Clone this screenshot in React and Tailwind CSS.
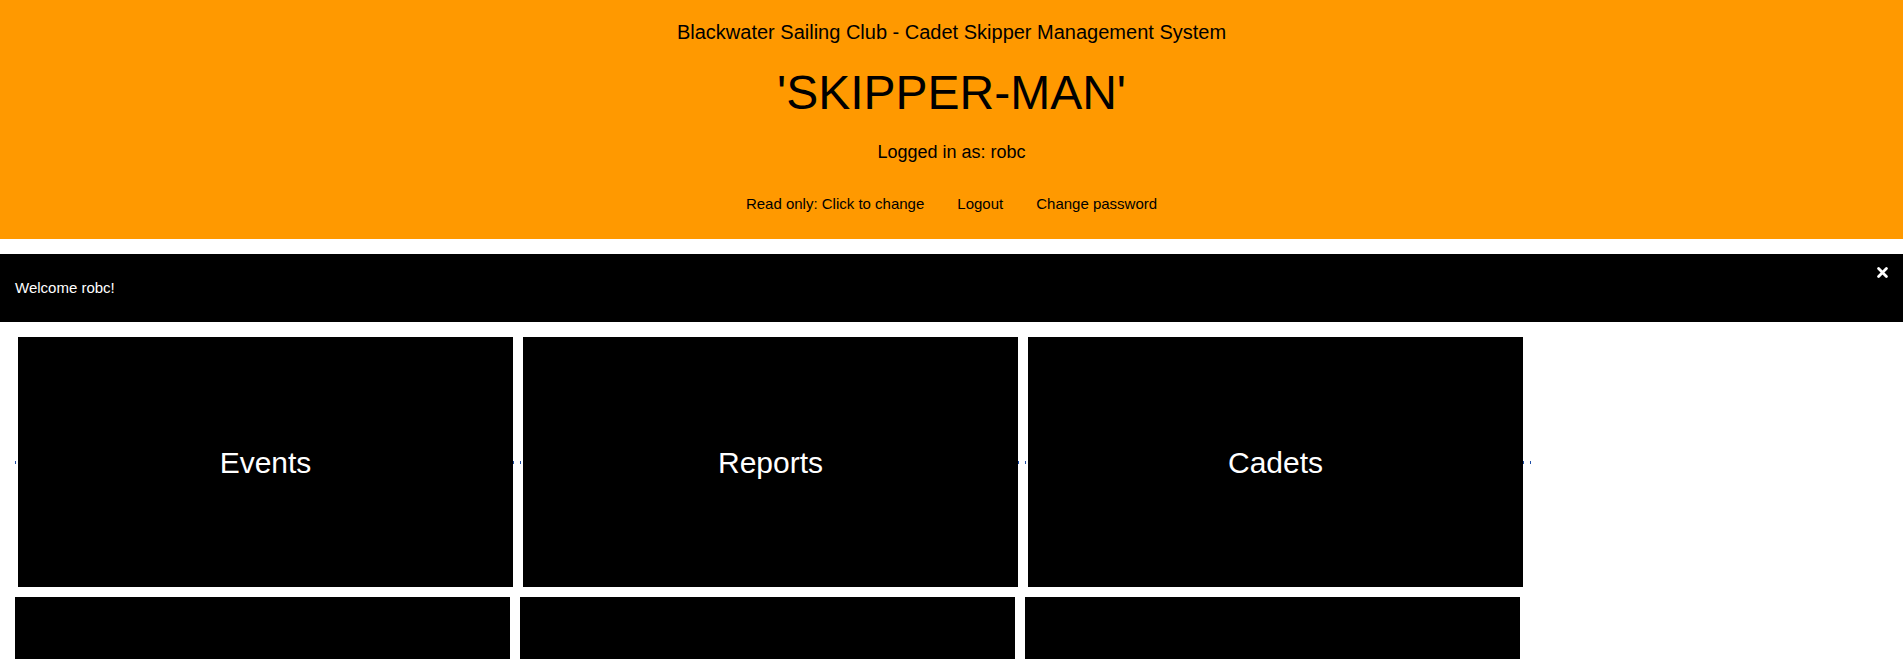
import React from "react";

const Dot = () => <span className="block w-px h-[3px] bg-[#1f4fa8] self-center" />;

function Card({ label }) {
  return (
    <div className="w-[495px] h-[250px] bg-black flex items-center justify-center text-white text-[30px] leading-none pt-[2px]">
      {label}
    </div>
  );
}

export default function App() {
  return (
    <div className="w-[1903px] h-[659px] overflow-hidden bg-white font-['Liberation_Sans',Arial,sans-serif] text-black">
      <header className="h-[239px] bg-[#ff9900] flex flex-col items-center pt-[22px]">
        <div className="text-[20px] leading-[20px] h-[20px]">Blackwater Sailing Club - Cadet Skipper Management System</div>
        <h1 className="mt-[27px] text-[48px] leading-[48px] h-[48px]">'SKIPPER-MAN'</h1>
        <div className="mt-[26px] text-[18px] leading-[18px] h-[18px]">Logged in as: robc</div>
        <nav className="mt-[35px] flex gap-[33px] text-[15px] leading-[15px]">
          <a href="#">Read only: Click to change</a>
          <a href="#">Logout</a>
          <a href="#">Change password</a>
        </nav>
      </header>

      <div className="relative mt-[15px] h-[68px] bg-black flex items-center px-[15px] text-white text-[15px]">
        Welcome robc!
        <button className="absolute top-[13px] right-[15px] w-[11px] h-[11px]" aria-label="close">
          <svg viewBox="0 0 11 11" width="11" height="11">
            <path d="M1.6 1.6 L9.4 9.4 M9.4 1.6 L1.6 9.4" stroke="white" strokeWidth="2.8" strokeLinecap="round" />
          </svg>
        </button>
      </div>

      <div className="mt-[15px] flex pl-[15px] gap-[6px]">
        {["Events", "Reports", "Cadets"].map((l) => (
          <a key={l} href="#" className="flex items-center">
            <Dot />
            <span className="ml-[2px]">
              <Card label={l} />
            </span>
            <Dot />
          </a>
        ))}
        <Dot />
      </div>

      <div className="mt-[10px] flex pl-[15px] gap-[10px]">
        <Card label="" />
        <Card label="" />
        <Card label="" />
      </div>
    </div>
  );
}
